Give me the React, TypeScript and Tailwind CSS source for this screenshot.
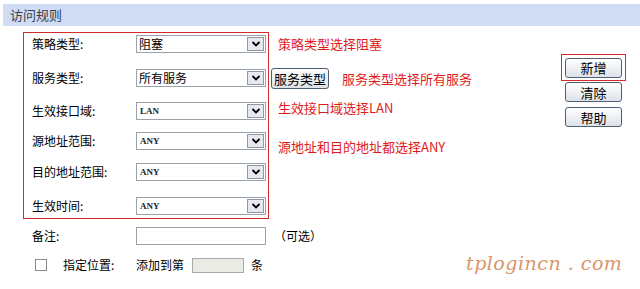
import React from "react";

const cjk = "font-['SimSun','Noto_Sans_CJK_SC',sans-serif]";

const Chevron = () => (
  <svg width="10" height="8" viewBox="0 0 10 8">
    <path d="M1.5 2 L5 5.5 L8.5 2" fill="none" stroke="#000" strokeWidth="1.8" />
  </svg>
);

const Select = ({ value, latin }: { value: string; latin?: boolean }) => (
  <div className="flex h-[18px] w-[130px] items-center border border-[#9aa2ac] bg-white">
    <span
      className={
        latin
          ? "flex-1 pl-[3px] font-['Liberation_Serif',serif] text-[9px] font-bold leading-none text-[#222]"
          : "flex-1 pl-[2px] text-[12px] leading-none text-black"
      }
    >
      {value}
    </span>
    <div className="mr-px flex h-[14px] w-[17px] items-center justify-center border border-[#8e98a4] bg-[#e6e9ee]">
      <Chevron />
    </div>
  </div>
);

const Btn = ({ label, className = "" }: { label: string; className?: string }) => (
  <button
    className={`flex items-center justify-center rounded-[3px] border border-[#4f5f72] bg-linear-to-b from-white to-[#dde2e9] text-[13px] leading-none text-black ${className}`}
  >
    {label}
  </button>
);

const rows = [
  { label: "策略类型:", value: "阻塞", mt: "mt-[1px]" },
  { label: "服务类型:", value: "所有服务", mt: "mt-[14px]" },
  { label: "生效接口域:", value: "LAN", latin: true, mt: "mt-[13px]" },
  { label: "源地址范围:", value: "ANY", latin: true, mt: "mt-[10px]" },
  { label: "目的地址范围:", value: "ANY", latin: true, mt: "mt-[11px]" },
  { label: "生效时间:", value: "ANY", latin: true, mt: "mt-[14px]" },
];

export default function App() {
  return (
    <div className={`relative h-[289px] w-[640px] overflow-hidden bg-white ${cjk}`}>
      {/* header */}
      <div className="ml-[3px] mt-[4px] flex h-[22px] items-center bg-[#cfdcf3] pl-[7px] text-[13px] text-[#36414f]">
        访问规则
      </div>

      <div className="flex">
        {/* rule box */}
        <div className="ml-[23px] mt-[6px] flex h-[187px] w-[246px] flex-col border border-[#d42a2a] pl-[8px]">
          {rows.map((r) => (
            <div key={r.label} className={`flex h-[20px] items-center ${r.mt}`}>
              <span className="w-[104px] text-[12px] text-black">{r.label}</span>
              <Select value={r.value} latin={r.latin} />
            </div>
          ))}
        </div>

        {/* annotations */}
        <div className="ml-[2px] flex flex-1 flex-col text-[13px] text-[#e01b1b]">
          <div className="mt-[9px] flex h-[18px] items-center pl-[7px]">策略类型选择阻塞</div>
          <div className="mt-[15px] flex h-[21px] items-center">
            <Btn label="服务类型" className="h-[21px] w-[58px]" />
            <span className="ml-[13px]">服务类型选择所有服务</span>
          </div>
          <div className="mt-[10px] flex h-[18px] items-center pl-[7px]">生效接口域选择LAN</div>
          <div className="mt-[21px] flex h-[18px] items-center pl-[7px]">源地址和目的地址都选择ANY</div>
        </div>

        {/* action buttons */}
        <div className="mr-[14px] mt-[28px] flex w-[65px] flex-col items-center">
          <div className="flex h-[27px] w-[65px] items-center justify-center border border-[#d42a2a]">
            <Btn label="新增" className="h-[20px] w-[57px]" />
          </div>
          <Btn label="清除" className="mt-[1px] h-[20px] w-[57px]" />
          <Btn label="帮助" className="mt-[5px] h-[20px] w-[57px]" />
        </div>
      </div>

      {/* remark */}
      <div className="mt-[8px] flex h-[18px] items-center pl-[32px] text-[12px] text-black">
        <span className="w-[104px]">备注:</span>
        <div className="h-[18px] w-[130px] border border-[#9aa2ac] bg-white" />
        <span className="ml-[8px]">（可选）</span>
      </div>

      {/* position */}
      <div className="mt-[12px] flex h-[16px] items-center pl-[35px] text-[12px] text-black">
        <div className="h-[12px] w-[12px] border border-[#8a8a8a] bg-white" />
        <span className="ml-[16px] w-[73px]">指定位置:</span>
        <span>添加到第</span>
        <div className="ml-[8px] h-[15px] w-[52px] border border-[#a9a9a9] bg-[#ebebe6]" />
        <span className="ml-[7px]">条</span>
      </div>

      {/* watermark */}
      <div className="absolute left-[466px] top-[249px] font-['DejaVu_Serif',serif] text-[19px] italic tracking-[0.5px] text-[#d9966a]">
        tplogincn . com
      </div>
    </div>
  );
}
